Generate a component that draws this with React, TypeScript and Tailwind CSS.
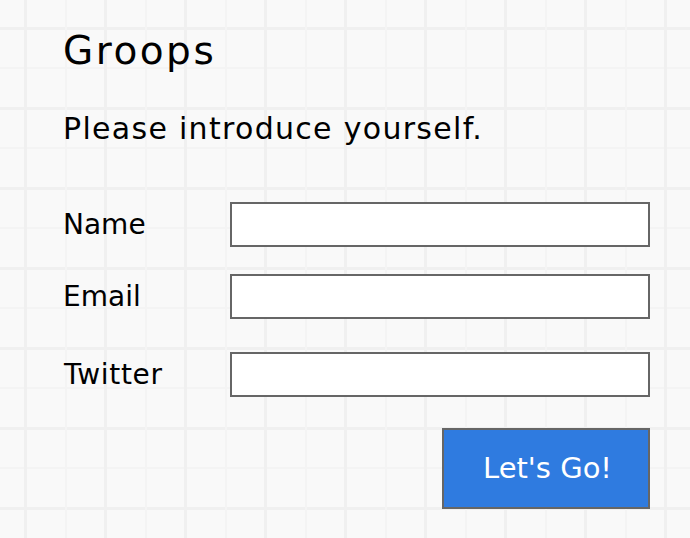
import React from "react";

export default function App() {
  return (
    <div
      className="w-[690px] h-[538px] overflow-hidden bg-[#f9f9f9] bg-[image:repeating-linear-gradient(90deg,transparent_0_24px,#f0f0f0_24px_27px,transparent_27px_65px,#f4f4f4_65px_67px,transparent_67px_80px),repeating-linear-gradient(180deg,transparent_0_27px,#f0f0f0_27px_30px,transparent_30px_67px,#f4f4f4_67px_69px,transparent_69px_80px)] text-black"
      style={{ fontFamily: '"DejaVu Sans", "Liberation Sans", sans-serif' }}
    >
      <div className="pl-[63px] pr-[40px] pt-[27px] flex flex-col w-[650px] box-content">
        <h1 className="text-[39px] leading-[48px] font-normal tracking-[2.5px]">Groops</h1>
        <p className="mt-[34px] text-[30px] leading-[40px] tracking-[1.3px]">Please introduce yourself.</p>
        <div className="mt-[53px] flex flex-col">
          <div className="flex items-center">
            <label className="w-[167px] text-[28px] leading-[36px]">Name</label>
            <input className="w-[420px] h-[45px] border-2 border-[#666666] bg-white outline-none" />
          </div>
          <div className="flex items-center mt-[27px]">
            <label className="w-[167px] text-[28px] leading-[36px]">Email</label>
            <input className="w-[420px] h-[45px] border-2 border-[#666666] bg-white outline-none" />
          </div>
          <div className="flex items-center mt-[33px]">
            <label className="w-[167px] pl-[1px] text-[28px] leading-[36px] tracking-[0.7px]">Twitter</label>
            <input className="w-[420px] h-[45px] border-2 border-[#666666] bg-white outline-none" />
          </div>
          <div className="flex justify-end w-[587px] mt-[31px]">
            <button className="w-[208px] h-[81px] border-2 border-[#666666] bg-[#2f7be0] text-white text-[29px] pl-[3px]">
              Let's Go!
            </button>
          </div>
        </div>
      </div>
    </div>
  );
}
